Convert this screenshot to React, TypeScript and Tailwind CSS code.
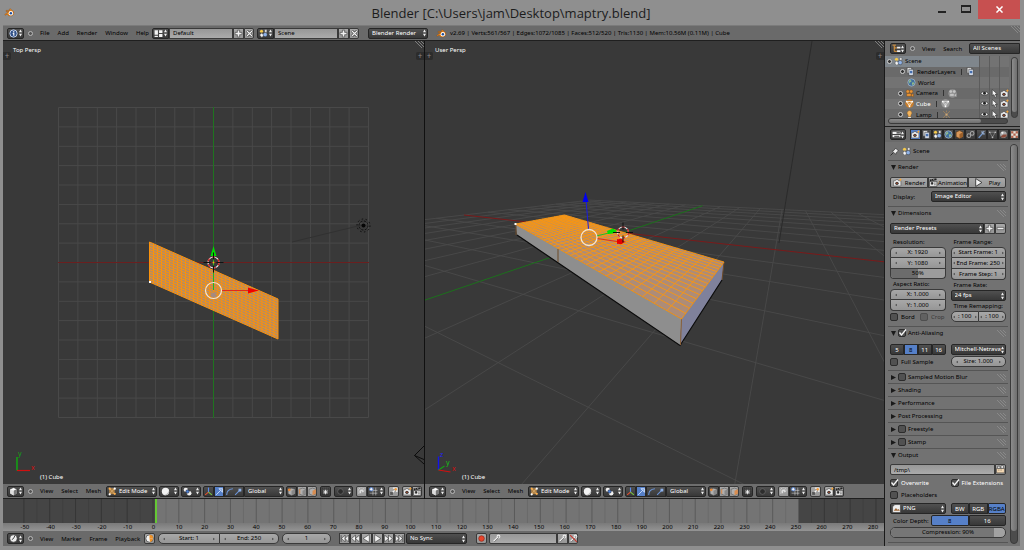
import type { ReactNode } from "react";
import { clsx } from "clsx";

type Point = [number, number];

const dark =
  "border border-[#262626] bg-linear-to-b from-[#505050] to-[#383838] text-white";
const light =
  "border border-[#3a3a3a] bg-linear-to-b from-[#a8a8a8] to-[#969696] text-black";
const field =
  "border border-[#3a3a3a] bg-linear-to-b from-[#979797] to-[#ababab] text-black";
const active = "border border-[#262626] bg-[#5680c8] text-black";

/* ---------- icons ---------- */

function Icon({ children, big }: { children: ReactNode; big?: boolean }) {
  return (
    <svg
      viewBox="0 0 16 16"
      className={clsx("shrink-0", big ? "size-[11px]" : "size-[9px]")}
      aria-hidden="true"
    >
      {children}
    </svg>
  );
}

const BlenderIcon = () => (
  <Icon big>
    <path
      d="M1 11 7 6.5H3V5h6L7.5 3.5 9 2.5l5 4.5a5 4.5 0 1 1-9.500 3L2.500 12z"
      fill="#f08a1c"
      stroke="#8a4a10"
      strokeWidth=".6"
    />
    <circle cx="10" cy="9" r="3.2" fill="#fff" />
    <circle cx="10" cy="9" r="1.8" fill="#1f4f9c" />
  </Icon>
);

const InfoIcon = () => (
  <Icon>
    <circle cx="8" cy="8" r="6.5" fill="#33538a" stroke="#c9d6ee" strokeWidth="1.6" />
    <path d="M7 4h2.500v2H7zM6.500 7h3v5h-2V8.500h-1z" fill="#fff" />
  </Icon>
);

const CubeIcon = () => (
  <Icon>
    <path d="M8 1 14 3.500v8L8 15 2 11.500v-8z" fill="#fff" stroke="#222" />
    <path d="M8 6.500 14 3.500v8L8 15z" fill="#777" />
    <path d="M2 3.500 8 6.500v8.500L2 11.500z" fill="#ddd" />
  </Icon>
);

const ClockIcon = () => (
  <Icon>
    <circle cx="8" cy="8" r="6.5" fill="#eee" stroke="#333" />
    <path d="M8 8 10.500 3M8 8l-3 2" stroke="#222" strokeWidth="1.5" />
  </Icon>
);

const KeyClockIcon = () => (
  <Icon>
    <circle cx="8" cy="8" r="6.5" fill="#f3f3f3" stroke="#222" />
    <path d="M8 8V1.500A6.500 6.500 0 0 1 14.500 8z" fill="#ef9228" />
    <path d="M8 8h6a6 6 0 0 1-5 6z" fill="#ef9228" />
  </Icon>
);

const LayoutIcon = () => (
  <Icon>
    <path d="M1 2h6v8H1zM9 2h6v5H9zM9 9h6v5H9zM1 12h6v2H1z" fill="#f2f2f2" />
  </Icon>
);

const SceneIcon = () => (
  <Icon>
    <circle cx="4.500" cy="4" r="2.800" fill="#f4c94a" />
    <path d="M1 10.500 5 7l4 4-4 4z" fill="#f3f3f3" stroke="#333" strokeWidth=".7" />
    <circle cx="11" cy="10" r="3.800" fill="#8fb2e6" stroke="#222" strokeWidth=".7" />
    <path d="M10 1h4v5h-4z" fill="#e8e8e8" stroke="#333" strokeWidth=".7" />
  </Icon>
);

const LayersIcon = () => (
  <Icon>
    <path d="M2 1h8v10H2z" fill="#eee" stroke="#333" />
    <path d="M5 4h8v11H5z" fill="#d4dcea" stroke="#333" />
    <circle cx="9" cy="9" r="2.500" fill="#466fae" />
  </Icon>
);

const WorldIcon = () => (
  <Icon>
    <circle cx="8" cy="8" r="6.500" fill="#41709f" stroke="#c5cfda" />
    <path d="M4 4q4-2 4 2l-3 2q-1 3-2 1zM9 8q4-1 4 2l-3 3q-2-2-1-5z" fill="#8fb88a" />
  </Icon>
);

const CameraObjIcon = ({ ghost }: { ghost?: boolean }) => (
  <Icon>
    {ghost && <circle cx="8" cy="8" r="7.500" fill="#8f8f8f" />}
    <g fill={ghost ? "#c4c4c4" : "#e79436"} stroke={ghost ? "#7a7a7a" : "#6a3d10"} strokeWidth=".6">
      <circle cx="5" cy="4.500" r="3" />
      <circle cx="11" cy="4.500" r="3" />
      <path d="M3 8h8v5H3zM11 10l4-2v6l-4-2z" />
    </g>
  </Icon>
);

const MeshIcon = ({ ghost }: { ghost?: boolean }) => (
  <Icon>
    <circle cx="8" cy="8" r="7.500" fill={ghost ? "#9a9a9a" : "#c97e2c"} />
    <path d="M3 4.500h10L8 13z" fill="none" stroke={ghost ? "#ddd" : "#fff"} strokeWidth="1.300" />
    <path d="M3 4.500 8 8l5-3.500M8 8v5" stroke={ghost ? "#ddd" : "#ffd9a0"} fill="none" />
    <circle cx="3" cy="4.500" r="1.500" fill="#fff" />
    <circle cx="13" cy="4.500" r="1.500" fill="#fff" />
    <circle cx="8" cy="13" r="1.500" fill="#fff" />
  </Icon>
);

const LampIcon = () => (
  <Icon>
    <path d="M8 1a4.500 4.500 0 0 1 2.500 8v3h-5V9A4.500 4.500 0 0 1 8 1z" fill="#f5b55c" stroke="#7a4c14" strokeWidth=".6" />
    <path d="M5.500 12.500h5V15h-5z" fill="#e8e8e8" />
  </Icon>
);

const RayIcon = () => (
  <Icon>
    <path d="m2 2 12 12M14 2 2 14M8 1v3M8 12v3" stroke="#a98658" strokeWidth="1.300" />
    <circle cx="8" cy="8" r="2" fill="#cfa878" />
  </Icon>
);

const RenderIcon = () => (
  <Icon>
    <path d="M1 5h3l1-2h4l1 2h4v9H1z" fill="#eee" stroke="#333" strokeWidth=".8" />
    <circle cx="7" cy="9.500" r="3" fill="#333" />
    <circle cx="7" cy="9.500" r="1.300" fill="#c4542f" />
    <path d="m13 0 1 2.200L16 3l-2 .9L13 6l-.9-2.100L10 3l2.100-.8z" fill="#f5a53a" />
  </Icon>
);

const ClapIcon = () => (
  <Icon>
    <path d="M1 6h13v9H1z" fill="#e9e9e9" stroke="#222" />
    <path d="M1 2.500 13 .5l.6 3L1.600 6z" fill="#222" />
    <path d="m4 2.500 1 2M8 1.800l1 2" stroke="#eee" />
    <path d="M4 8h3v3H4zM9 9h3M9 12h3" fill="#222" stroke="#222" />
  </Icon>
);

const PlayIcon = () => (
  <Icon>
    <path d="M3 1 14 8 3 15z" fill="#f4f4f4" stroke="#222" strokeWidth="1.400" />
  </Icon>
);

const PlusIcon = () => (
  <Icon>
    <path d="M6 2h4v4h4v4h-4v4H6v-4H2V6h4z" fill="#f0f0f0" stroke="#333" />
  </Icon>
);

const MinusIcon = () => (
  <Icon>
    <path d="M2 6h12v4H2z" fill="#f0f0f0" stroke="#333" />
  </Icon>
);

const CrossIcon = () => (
  <Icon>
    <path d="m3.500 3.500 9 9m0-9-9 9" stroke="#333" strokeWidth="4.500" />
    <path d="m3.500 3.500 9 9m0-9-9 9" stroke="#f0f0f0" strokeWidth="2.200" />
  </Icon>
);

const EditModeIcon = () => (
  <Icon>
    <path d="M3 3h8v9H3z" fill="#a87b3e" stroke="#e2a559" />
    <path d="m3 3 8 9M11 3l-8 9" stroke="#f0c58a" />
    <circle cx="3" cy="3" r="2" fill="#ffb14d" />
    <circle cx="12" cy="3" r="2" fill="#fff" />
    <circle cx="3" cy="13" r="2" fill="#fff" />
    <circle cx="12" cy="12" r="2" fill="#ffb14d" />
  </Icon>
);

const SolidIcon = () => (
  <Icon>
    <circle cx="8" cy="8" r="6.500" fill="#f2f2f2" />
    <path d="M14 6A6.500 6.500 0 0 1 5 14q7-1 9-8z" fill="#bbb" />
  </Icon>
);

const PivotIcon = () => (
  <Icon>
    <circle cx="5" cy="5" r="3.800" fill="#f2f2f2" />
    <circle cx="11" cy="11" r="4" fill="#f2f2f2" />
    <circle cx="8" cy="8" r="3" fill="#4c7fd0" stroke="#223" />
  </Icon>
);

const AxesIcon = () => (
  <Icon>
    <path d="M8 9V1" stroke="#5b8cf0" strokeWidth="2" />
    <path d="m8 9-6 5" stroke="#e8502e" strokeWidth="2" />
    <path d="m8 9 6 5" stroke="#7ac943" strokeWidth="2" />
  </Icon>
);

const TranslateIcon = () => (
  <Icon>
    <path d="M2 14 10 6M7 3h6.500v6.500z" stroke="#dce9ff" fill="#7aa3e6" strokeWidth="1.400" />
  </Icon>
);

const RotateIcon = () => (
  <Icon>
    <path d="M3 14Q3 4 14 3" fill="none" stroke="#6b95d8" strokeWidth="2" />
  </Icon>
);

const ScaleIcon = () => (
  <Icon>
    <path d="m2 14 8-8" stroke="#6b95d8" strokeWidth="2" />
    <path d="M8 3h5v5H8z" fill="#8fb2ea" />
  </Icon>
);

const SelectCube = ({ mode }: { mode: "vertex" | "edge" | "face" }) => (
  <Icon>
    <path d="M2 4 8 2l6 2v8l-6 3-6-3z" fill="#b0b0b0" stroke="#555" />
    <path d="M8 6.500v8L14 12V4z" fill={mode === "face" ? "#d98d50" : "#888"} />
    {mode === "edge" && <path d="M3 4v8" stroke="#d98d50" strokeWidth="2" />}
    {mode === "vertex" && <circle cx="4" cy="5" r="2.500" fill="#e6893a" />}
  </Icon>
);

const OccludeIcon = () => (
  <Icon>
    <path d="M2 2h12v12H2z" fill="none" stroke="#222" strokeDasharray="2 1.500" />
    <path d="M8 5v8M4 9h8M5 6l6 6M11 6l-6 6" stroke="#f4f4f4" strokeWidth="1.500" />
  </Icon>
);

const DotIcon = () => (
  <Icon>
    <circle cx="8" cy="8" r="5" fill="#2d2d2d" stroke="#777" />
  </Icon>
);

const MagnetIcon = () => (
  <Icon>
    <path d="M4 12 3 7q2-6 7-4l3 4M6 11 6 8q1-3 3-2l2 3" fill="none" stroke="#ddd" strokeWidth="2.600" />
    <path d="M4 12 3 7q2-6 7-4l3 4" fill="none" stroke="#666" />
  </Icon>
);

const SnapIcon = () => (
  <Icon>
    <path d="M7 1v14M12 1v14M1 6h14M1 11h14" stroke="#d8d8d8" />
    <circle cx="4" cy="4" r="3" fill="#f4f4f4" stroke="#4a7dd8" strokeWidth="1.500" />
  </Icon>
);

const WandIcon = () => (
  <Icon>
    <path d="m3 13 7-7M7 2h7v7" stroke="#f4f4f4" strokeWidth="2.400" fill="none" />
    <path d="M2 9h5v5H2z" fill="#555" />
    <circle cx="12" cy="4" r="2.200" fill="#ef9a3c" />
  </Icon>
);

const TreeIcon = () => (
  <Icon>
    <path d="M1 2h6M4 3v10h5M4 7h5" stroke="#f2a23c" strokeWidth="1.600" fill="none" />
    <path d="M9 5h6v3H9zM9 11h6v3H9z" fill="#eee" />
  </Icon>
);

const SlidersIcon = () => (
  <Icon>
    <path d="M1 3h14v4H1zM1 9h14v4H1z" fill="#f2f2f2" />
    <path d="M8 4h6v2H8zM4 10h9v2H4z" fill="#333" />
  </Icon>
);

const PinIcon = () => (
  <Icon>
    <path d="m1 15 5-5" stroke="#222" strokeWidth="1.500" />
    <path d="m4 7 3-1 3-4 5 5-4 3-1 3z" fill="#eee" stroke="#222" />
  </Icon>
);

const FolderIcon = () => (
  <Icon>
    <path d="M1 6h14v8H1z" fill="#f5d9b4" stroke="#333" />
    <path d="M3 2h4v4H3zM9 1h4v5H9z" fill="#fff" stroke="#333" />
    <path d="M4 9h2M8 9h2" stroke="#333" />
  </Icon>
);

const ImageIcon = () => (
  <Icon>
    <path d="M5 1h10v14H1V5z" fill="#eee" stroke="#333" />
    <path d="M3 12 7 7l3 3 2-1 2 3z" fill="#a06a3b" />
  </Icon>
);

const EyeIcon = () => (
  <Icon>
    <path d="M1 8q7-7 14 0-7 6-14 0z" fill="#f6f6f6" stroke="#222" />
    <circle cx="8" cy="7.500" r="2.600" fill="#222" />
  </Icon>
);

const PointerIcon = () => (
  <Icon>
    <path d="M4 1v11l3-2 2 5 2.500-1-2-5H13z" fill="#f6f6f6" stroke="#222" />
  </Icon>
);

const LinkIcon = () => (
  <Icon>
    <circle cx="5" cy="10" r="3.200" fill="none" stroke="#a8a8a8" strokeWidth="1.800" />
    <circle cx="11" cy="6" r="3.200" fill="none" stroke="#a8a8a8" strokeWidth="1.800" />
  </Icon>
);

const WrenchIcon = () => (
  <Icon>
    <path d="m3 14 7-8" stroke="#7397cc" strokeWidth="2.600" />
    <path d="M9 2q-1 5 5 5M9 6l4-4" fill="none" stroke="#93acd0" strokeWidth="2" />
  </Icon>
);

const TriIcon = () => (
  <Icon>
    <path d="M3 4h10L8 13z" fill="none" stroke="#999" />
    <circle cx="3" cy="4" r="1.500" fill="#bbb" />
    <circle cx="13" cy="4" r="1.500" fill="#bbb" />
    <circle cx="8" cy="13" r="1.500" fill="#bbb" />
  </Icon>
);

const MaterialIcon = () => (
  <Icon>
    <circle cx="8" cy="8" r="6" fill="#a8a8a8" />
    <path d="M8 8h6a6 6 0 0 1-11 3z" fill="#8a4a3a" />
    <circle cx="6" cy="5" r="2" fill="#eee" />
  </Icon>
);

const TextureIcon = () => (
  <Icon>
    <path d="M2 2h12v12H2z" fill="#e4e0d8" />
    <path d="M2 2h4v4H2zM10 2h4v4h-4zM6 6h4v4H6zM2 10h4v4H2zM10 10h4v4h-4z" fill="#b0604a" />
  </Icon>
);

const BoxIcon = () => (
  <Icon>
    <path d="M8 1 14 4v8l-6 3-6-3V4z" fill="#d8975a" stroke="#5a3713" />
    <path d="M8 7v8l6-3V4z" fill="#9c602a" />
  </Icon>
);

const KeyIcon = ({ off }: { off?: boolean }) => (
  <Icon>
    <path d="m3 13 7-7" stroke="#eee" strokeWidth="2.400" />
    <circle cx="11.500" cy="4.500" r="2.500" fill="none" stroke="#eee" strokeWidth="1.800" />
    <path d="m4 14 8-8" stroke="#444" />
    {off && <path d="m2 2 12 12" stroke="#c8372d" strokeWidth="2" />}
  </Icon>
);

const Arrows = () => (
  <svg viewBox="0 0 3 8" className="pointer-events-none h-[8px] w-[3px] shrink-0" aria-hidden="true">
    <path d="M0 3.200 1.500 .5 3 3.200zM0 4.800l1.500 2.700L3 4.800z" fill="#f0f0f0" />
  </svg>
);

const Grip = () => (
  <svg viewBox="0 0 9 7" className="h-[7px] w-[9px] shrink-0" aria-hidden="true">
    <path d="m0 0 7 7M3 0l6 6M6 0l3 3" stroke="#8f8f8f" strokeWidth=".8" />
  </svg>
);

/* ---------- widgets ---------- */

function Drop({
  label,
  icon,
  text,
  className,
}: {
  label: string;
  icon?: ReactNode;
  text?: string;
  className?: string;
}) {
  return (
    <div className={clsx("flex h-[11px] items-center overflow-hidden rounded-[2px] px-px", dark, className)}>
      {icon}
      <select
        aria-label={label}
        className={clsx(
          "h-[9px] w-0 min-w-0 flex-1 appearance-none bg-transparent leading-[9px] outline-none",
          text && "pl-[2px]"
        )}
      >
        <option>{text ?? ""}</option>
      </select>
      <Arrows />
    </div>
  );
}

function Tool({
  label,
  tone = "light",
  className,
  children,
}: {
  label: string;
  tone?: "light" | "dark" | "active";
  className?: string;
  children: ReactNode;
}) {
  return (
    <button
      type="button"
      aria-label={label}
      className={clsx(
        "flex h-[11px] items-center justify-center",
        tone === "light" && light,
        tone === "dark" && dark,
        tone === "active" && active,
        className
      )}
    >
      {children}
    </button>
  );
}

function NumberField({ value, tight, className }: { value: string; tight?: boolean; className?: string }) {
  return (
    <div className={clsx("flex h-[11px] min-w-0 items-center", tight ? "px-px" : "px-[4px]", light, className)}>
      <svg viewBox="0 0 3 4" className="h-[4px] w-[2px] shrink-0" aria-hidden="true">
        <path d="M3 0v4L0 2z" fill="#555" />
      </svg>
      <input
        aria-label={value.split(":")[0] || "Remap"}
        defaultValue={value}
        className="h-[9px] w-0 min-w-0 flex-1 bg-transparent text-center leading-[9px] outline-none"
      />
      <svg viewBox="0 0 3 4" className="h-[4px] w-[2px] shrink-0" aria-hidden="true">
        <path d="M0 0v4l3-2z" fill="#555" />
      </svg>
    </div>
  );
}

function Check({
  label,
  text,
  checked,
  className,
}: {
  label: string;
  text?: boolean;
  checked?: boolean;
  className?: string;
}) {
  return (
    <label className={clsx("flex items-center gap-[3px] whitespace-nowrap", className)}>
      <span className="grid shrink-0">
        <input
          type="checkbox"
          aria-label={label}
          defaultChecked={checked}
          className="peer col-start-1 row-start-1 size-[8px] appearance-none rounded-[2px] border border-[#2c2c2c] bg-[#515151]"
        />
        <svg
          viewBox="0 0 8 8"
          className="pointer-events-none invisible col-start-1 row-start-1 size-[8px] overflow-visible peer-checked:visible"
          aria-hidden="true"
        >
          <path d="m1.500 3.500 2 2.500L8 .5" fill="none" stroke="#f6f6f6" strokeWidth="1.300" />
        </svg>
      </span>
      {text !== false && label}
    </label>
  );
}

function Collapse() {
  return (
    <button
      type="button"
      aria-label="Collapse menus"
      className="size-[5px] rounded-full border border-[#b8b8b8] bg-[#555]"
    />
  );
}

function Menu({ items, className }: { items: string[]; className?: string }) {
  return (
    <nav className={clsx("flex", className)}>
      {items.map((item) => (
        <button key={item} type="button">
          {item}
        </button>
      ))}
    </nav>
  );
}

function DataBlock({ icon, name }: { icon: ReactNode; name: string }) {
  return (
    <div className="flex">
      <Drop label={`Browse ${name}`} icon={icon} className="w-[17px] rounded-r-none" />
      <input
        aria-label={`${name} name`}
        defaultValue={name}
        className={clsx("h-[11px] w-[64px] px-[3px] leading-[9px]", field)}
      />
      <Tool label={`Add ${name}`} className="w-[11px]">
        <PlusIcon />
      </Tool>
      <Tool label={`Remove ${name}`} className="w-[10px] rounded-r-[2px]">
        <CrossIcon />
      </Tool>
    </div>
  );
}

/* ---------- title bar and info header ---------- */

function TitleBar() {
  return (
    <header className="flex h-[25px] shrink-0 items-start bg-[#8f8f8f]">
      <div className="flex h-[25px] w-[92px] items-center pl-[4px]">
        <BlenderIcon />
      </div>
      <h1 className="flex-1 pt-[3px] text-center font-['Open_Sans',sans-serif] text-[13px] leading-[21px] text-[#1c1c1c]">
        Blender [C:\Users\jam\Desktop\maptry.blend]
      </h1>
      <div className="mr-[4px] flex">
        <button type="button" aria-label="Minimize" className="flex h-[18px] w-[24px] items-center justify-center pt-[6px]">
          <span className="h-[2px] w-[8px] bg-[#222]" />
        </button>
        <button type="button" aria-label="Maximize" className="flex h-[18px] w-[24px] items-center justify-center">
          <span className="h-[8px] w-[10px] border-2 border-x border-[#222]" />
        </button>
        <button type="button" aria-label="Close" className="flex h-[19px] w-[42px] items-center justify-center bg-[#c75050]">
          <svg viewBox="0 0 8 8" className="size-[7px]" aria-hidden="true">
            <path d="m.5.5 7 7m0-7-7 7" stroke="#fff" strokeWidth="1.700" />
          </svg>
        </button>
      </div>
    </header>
  );
}

function InfoHeader() {
  return (
    <div className="flex h-[16px] shrink-0 items-center border-t border-b border-t-[#7b7b7b] border-b-[#1f1f1f] bg-[#6a6a6a] pl-[4px] whitespace-nowrap">
      <Drop label="Editor type" icon={<InfoIcon />} className="w-[17px]" />
      <div className="ml-[4px] flex items-center">
        <Collapse />
      </div>
      <Menu items={["File", "Add", "Render", "Window", "Help"]} className="ml-[7px] w-[112px] gap-[8px]" />
      <DataBlock icon={<LayoutIcon />} name="Default" />
      <div className="ml-[3px]">
        <DataBlock icon={<SceneIcon />} name="Scene" />
      </div>
      <Drop label="Render engine" text="Blender Render" className="ml-[9px] w-[60px]" />
      <div className="ml-[8px]">
        <BlenderIcon />
      </div>
      <p className="ml-[3px]">
        v2.69 | Verts:561/567 | Edges:1072/1085 | Faces:512/520 | Tris:1130 | Mem:10.56M (0.11M) | Cube
      </p>
      <div className="ml-auto self-start">
        <Grip />
      </div>
    </div>
  );
}

/* ---------- 3D viewports ---------- */

// Bilinear-with-perspective map of the unit square onto a four-sided face.
function project([p0, p1, p2, p3]: Point[]) {
  const sx = p0[0] - p1[0] + p2[0] - p3[0];
  const sy = p0[1] - p1[1] + p2[1] - p3[1];
  const dx1 = p1[0] - p2[0];
  const dy1 = p1[1] - p2[1];
  const dx2 = p3[0] - p2[0];
  const dy2 = p3[1] - p2[1];
  const det = dx1 * dy2 - dx2 * dy1;
  const g = (sx * dy2 - dx2 * sy) / det;
  const h = (dx1 * sy - sx * dy1) / det;
  return (u: number, v: number): Point => {
    const w = g * u + h * v + 1;
    return [
      ((p1[0] - p0[0] + g * p1[0]) * u + (p3[0] - p0[0] + h * p3[0]) * v + p0[0]) / w,
      ((p1[1] - p0[1] + g * p1[1]) * u + (p3[1] - p0[1] + h * p3[1]) * v + p0[1]) / w,
    ];
  };
}

const segment = (a: Point, b: Point) =>
  `M${a[0].toFixed(1)} ${a[1].toFixed(1)}L${b[0].toFixed(1)} ${b[1].toFixed(1)}`;

function wire(corners: Point[], cols: number, rows: number) {
  const at = project(corners);
  let d = "";
  for (let i = 0; i <= cols; i++) d += segment(at(i / cols, 0), at(i / cols, 1));
  for (let j = 0; j <= rows; j++) d += segment(at(0, j / rows), at(1, j / rows));
  return d;
}

// Floor plane seen through the user camera, in grid units.
const depth = (x: number, y: number) => 1 - 0.0584 * x + 0.1164 * y;
const floor = (x: number, y: number): Point => [
  (623 - 7.22 * x + 91.7 * y) / depth(x, y),
  (232.7 - 10.34 * x + 20.56 * y) / depth(x, y),
];

function floorGrid() {
  let d = "";
  for (let i = -8; i <= 8; i++) {
    if (i === 0) continue;
    const nearY = Math.max(-8, (0.1 - 1 + 0.0584 * i) / 0.1164);
    const nearX = Math.min(8, (1 - 0.1 + 0.1164 * i) / 0.0584);
    d += segment(floor(i, 8), floor(i, nearY));
    if (nearX > -8) d += segment(floor(-8, i), floor(nearX, i));
  }
  return d;
}

const topMesh: Point[] = [[149.5, 242], [278, 299], [278, 339], [149.5, 282]];
const topGrid: Point[] = [[58.5, 107.5], [368.5, 107.5], [368.5, 417.5], [58.5, 417.5]];
const userMesh: Point[] = [[515.5, 224], [681.5, 319], [724, 262], [564.5, 215]];

const poly = (points: Point[]) => points.map((p) => p.join(",")).join(" ");

function Cursor3D({ x, y }: { x: number; y: number }) {
  return (
    <g fill="none">
      <circle cx={x} cy={y} r="5.5" stroke="#e8e8e8" strokeWidth="1.2" />
      <circle cx={x} cy={y} r="5.5" stroke="#d01818" strokeWidth="1.2" strokeDasharray="3 3" />
      <path
        d={`M${x - 10} ${y}h7M${x + 3} ${y}h7M${x} ${y - 10}v7M${x} ${y + 3}v7`}
        stroke="#111"
        strokeWidth="1"
      />
    </g>
  );
}

function TopScene() {
  return (
    <svg viewBox="3 41 421 443" preserveAspectRatio="xMidYMid slice" className="absolute inset-0 size-full" aria-label="Top view">
      <path d={wire(topGrid, 16, 16)} stroke="#494949" fill="none" />
      <path d="M58 262.500h311" stroke="#6b1f1f" />
      <path d="M213.500 107v311" stroke="#1f741f" />
      <path d="m292 242 70-17" stroke="#313131" />
      <polygon points={poly(topMesh)} fill="#ab8b70" />
      <path d={wire(topMesh, 32, 16)} stroke="#fb920c" fill="none" />
      <path d="M149 281h2v2h-2z" fill="#fff" />
      <path d="M213.500 290v-34" stroke="#22b422" />
      <path d="m213.500 246 3 10h-6z" fill="#00dc00" />
      <path d="M222 290.500h27" stroke="#e02a1a" />
      <path d="m259 290.500-11 3v-6z" fill="#f00000" />
      <circle cx="213.500" cy="290.500" r="8" fill="none" stroke="#f4e6d2" strokeWidth="1.2" />
      <circle cx="213.500" cy="295" r="2.500" fill="#a58a80" />
      <Cursor3D x={213.5} y={262.5} />
      <circle cx="213.500" cy="262.500" r="1" fill="#e8b020" />
      <circle cx="363.500" cy="225.500" r="2" fill="#050505" />
      <circle cx="363.500" cy="225.500" r="4.500" fill="none" stroke="#0c0c0c" strokeDasharray="2 1.500" />
      <circle cx="363.500" cy="225.500" r="6.500" fill="none" stroke="#0c0c0c" strokeDasharray="1.500 2.500" />
      <path d="m424 446-9.500 9.500L424 464M414.500 455.500l9.500 4" stroke="#0c0c0c" fill="none" />
      <path d="M17 457v13.500" stroke="#14a014" strokeWidth="1.600" />
      <path d="M17 470.500h13" stroke="#d01010" strokeWidth="1.200" />
      <text x="18" y="456" fontSize="7" fill="#14a014">y</text>
      <text x="31" y="470" fontSize="7" fill="#d01010">x</text>
    </svg>
  );
}

function UserScene() {
  return (
    <svg viewBox="425 41 459 443" preserveAspectRatio="xMidYMid slice" className="absolute inset-0 size-full" aria-label="User view">
      <path d={floorGrid()} stroke="#494949" strokeWidth=".9" fill="none" />
      <path d={segment(floor(-8, 0), floor(8, 0))} stroke="#7a1a1a" />
      <path d={segment(floor(0, 8), floor(0, -5))} stroke="#1c701c" />
      <path d="m812 41-33 202" stroke="#2b2b2b" />
      <polygon points="515.5,224 681.5,319 680,345.5 517,235" fill="#8e8e8e" />
      <polygon points="681.5,319 724,262 722,280 680,345.5" fill="#7f819b" />
      <path d="m517 235 163 110.500L722 280" stroke="#0b0b0b" strokeWidth="1.200" fill="none" />
      <path d="M516 224v11M558 249v13" stroke="#6d4a28" />
      <path d="m681.500 319-1 26" stroke="#8a6038" />
      <path d="m724 262-2 18" stroke="#6d4a28" />
      <polygon points={poly(userMesh)} fill="#ad8c78" />
      <path d={wire(userMesh, 32, 16)} stroke="#fb960e" strokeWidth=".9" fill="none" />
      <path d="M514.500 223h2v2h-2z" fill="#fff" />
      <path d="M588.500 229 586 200" stroke="#1a1ae0" />
      <path d="m585.500 192 3 10h-6z" fill="#0000f0" />
      <path d="m596 236 13-3" stroke="#22c022" />
      <path d="m607 231 6-2.500 4 2.500-4 2.500-5 .5z" fill="#00e000" />
      <path d="m597 238.500 20 3" stroke="#e02a1a" />
      <path d="m626 242-9 2v-5z" fill="#f00000" />
      <circle cx="620.500" cy="241.500" r="2.800" fill="#e80000" />
      <circle cx="589" cy="237.500" r="8" fill="none" stroke="#f4e6d2" strokeWidth="1.300" />
      <Cursor3D x={623} y={232.5} />
      <path d="M438.500 456.500v13.500" stroke="#1414e8" strokeWidth="1.400" />
      <path d="m438.500 470 6-4" stroke="#14a014" strokeWidth="1.200" />
      <path d="m438.500 470 12 2" stroke="#d01010" strokeWidth="1.200" />
      <text x="440" y="457" fontSize="7" fill="#2222f0">z</text>
      <text x="446" y="465" fontSize="7" fill="#14c014">y</text>
      <text x="452" y="471" fontSize="7" fill="#d01010">x</text>
    </svg>
  );
}

function Expand({ side }: { side: "left" | "right" }) {
  return (
    <button
      type="button"
      aria-label={`Show ${side} shelf`}
      className={clsx(
        "absolute top-[11px] flex size-[8px] items-center justify-center bg-[#2c2c2c] text-[8px] leading-[8px] text-[#888]",
        side === "left" ? "left-0 rounded-r-[2px]" : "right-0 rounded-l-[2px]"
      )}
    >
      +
    </button>
  );
}

function ViewHeader() {
  return (
    <div className="flex h-[15px] shrink-0 items-center overflow-hidden border-b border-[#1f1f1f] bg-[#6e6e6e] pl-[4px] whitespace-nowrap">
      <Drop label="Editor type" icon={<CubeIcon />} className="w-[17px] shrink-0" />
      <div className="ml-[4px] flex items-center">
        <Collapse />
      </div>
      <Menu items={["View", "Select", "Mesh"]} className="ml-[7px] w-[65px] shrink-0 gap-[8px]" />
      <Drop label="Mode" icon={<EditModeIcon />} text="Edit Mode" className="ml-[1px] w-[51px] shrink-0" />
      <Drop label="Viewport shading" icon={<SolidIcon />} className="ml-[2px] w-[20px] shrink-0" />
      <Drop label="Pivot point" icon={<PivotIcon />} className="ml-[2px] w-[20px] shrink-0" />
      <div className="ml-[2px] flex shrink-0">
        <Tool label="Manipulators" tone="dark" className="w-[11px] rounded-l-[2px]">
          <AxesIcon />
        </Tool>
        <Tool label="Translate" tone="active" className="w-[10px]">
          <TranslateIcon />
        </Tool>
        <Tool label="Rotate" tone="dark" className="w-[10px] border-r-0">
          <RotateIcon />
        </Tool>
        <Tool label="Scale" tone="dark" className="w-[10px] border-l-0">
          <ScaleIcon />
        </Tool>
        <Drop label="Orientation" text="Global" className="w-[40px] rounded-l-none" />
      </div>
      <div className="ml-[2px] flex shrink-0">
        <Tool label="Vertex select" tone="dark" className="w-[11px] rounded-l-[2px] from-[#666] to-[#5a5a5a]">
          <SelectCube mode="vertex" />
        </Tool>
        <Tool label="Edge select" className="w-[10px]">
          <SelectCube mode="edge" />
        </Tool>
        <Tool label="Face select" className="w-[10px] rounded-r-[2px]">
          <SelectCube mode="face" />
        </Tool>
      </div>
      <Tool label="Limit selection" tone="dark" className="ml-[3px] w-[11px] shrink-0 rounded-[2px] from-[#666] to-[#5a5a5a]">
        <OccludeIcon />
      </Tool>
      <Drop label="Proportional editing" icon={<DotIcon />} className="ml-[3px] w-[19px] shrink-0" />
      <div className="ml-[3px] flex shrink-0">
        <Tool label="Snap" className="w-[11px] rounded-l-[2px]">
          <MagnetIcon />
        </Tool>
        <Drop label="Snap element" icon={<SnapIcon />} className="w-[18px] rounded-l-none" />
      </div>
      <Tool label="Auto merge" className="ml-[3px] w-[11px] shrink-0 rounded-[2px]">
        <WandIcon />
      </Tool>
      <div className="ml-[3px] flex shrink-0">
        <Tool label="Render view" className="w-[10px] rounded-l-[2px]">
          <RenderIcon />
        </Tool>
        <Tool label="Animate view" className="w-[10px] rounded-r-[2px]">
          <ClapIcon />
        </Tool>
      </div>
    </div>
  );
}

function Viewport({
  title,
  className,
  children,
}: {
  title: string;
  className: string;
  children: ReactNode;
}) {
  return (
    <section className={clsx("flex min-w-0 basis-0 flex-col", className)}>
      <div className="relative flex-1 overflow-hidden bg-[#393939] text-white">
        {children}
        <span className="absolute top-[5px] left-[10px]">{title}</span>
        <span className="absolute bottom-[3px] left-[37px]">(1) Cube</span>
        <Expand side="left" />
        <Expand side="right" />
        <div className="absolute top-0 right-0">
          <Grip />
        </div>
      </div>
      <ViewHeader />
    </section>
  );
}

/* ---------- timeline ---------- */

const frames = Array.from({ length: 34 }, (_, i) => i * 10 - 50);

function Timeline() {
  return (
    <section className="shrink-0 bg-[#6e6e6e]">
      <svg viewBox="0 0 881 24" preserveAspectRatio="none" className="h-[24px] w-full" aria-label="Frames">
        <path d="M0 0h881v24H0z" fill="#747474" />
        <path d="M0 0h152v24H0zM796 0h85v24h-85z" fill="#454545" />
        {frames.map((f) => (
          <g key={f} stroke="#000">
            <path d={`M${150 + f * 2.582} 0v24`} opacity=".22" />
            <path d={`M${163 + f * 2.582} 0v24`} opacity=".08" />
          </g>
        ))}
        <path d="M152 0h2v24h-2z" fill="#65c834" />
      </svg>
      <div className="flex h-[8px] items-center overflow-hidden bg-linear-to-b from-[#7a7a7a] to-[#949494] text-black">
        <div className="-mr-[2px] ml-[9px] flex min-w-0 flex-1">
          {frames.map((f) => (
            <span key={f} className="w-0 flex-1 text-center">
              {f}
            </span>
          ))}
        </div>
      </div>
      <div className="flex h-[15px] items-center bg-[#6a6a6a] pl-[4px] whitespace-nowrap">
        <Drop label="Editor type" icon={<ClockIcon />} className="w-[17px]" />
        <div className="ml-[4px] flex items-center">
          <Collapse />
        </div>
        <Menu items={["View", "Marker", "Frame", "Playback"]} className="ml-[7px] w-[104px] gap-[8px]" />
        <Tool label="Preview range" className="w-[11px] rounded-[2px]">
          <KeyClockIcon />
        </Tool>
        <div className="ml-[3px] flex">
          <NumberField value="Start: 1" className="w-[62px] rounded-l-[5px]" />
          <NumberField value="End: 250" className="w-[59px] rounded-r-[5px] border-l-0" />
        </div>
        <NumberField value="1" className="ml-[3px] w-[49px] rounded-[5px]" />
        <div className="ml-[8px] flex">
          {["First frame", "Previous keyframe", "Play backwards", "Play", "Next keyframe", "Last frame"].map((name, i) => (
            <Tool key={name} label={name} className="w-[11px]">
              <Icon>
                <path
                  d={
                    [
                      "M2 2v12M9 2 3 8l6 6zM15 2 9 8l6 6z",
                      "M8 2 1 8l7 6zM15 2 8 8l7 6z",
                      "M13 1 2 8l11 7z",
                      "M3 1v14l11-7z",
                      "M1 2l7 6-7 6zM8 2l7 6-7 6z",
                      "M1 2l6 6-6 6zM7 2l6 6-6 6zM14 2v12",
                    ][i]
                  }
                  fill="#f4f4f4"
                  stroke="#2a2a2a"
                />
              </Icon>
            </Tool>
          ))}
        </div>
        <Drop label="Sync mode" text="No Sync" className="ml-[1px] w-[61px]" />
        <Tool label="Record" className="ml-[9px] w-[11px] rounded-[2px]">
          <Icon>
            <circle cx="8" cy="8" r="5" fill="#e8432a" stroke="#7c1c10" />
          </Icon>
        </Tool>
        <div className="ml-[2px] flex">
          <div className={clsx("flex h-[11px] w-[68px] items-center rounded-l-[2px] px-[2px]", field)}>
            <KeyIcon />
            <input aria-label="Keying set" className="h-[9px] min-w-0 flex-1 bg-transparent" />
          </div>
          <Tool label="Insert keyframes" className="w-[11px]">
            <KeyIcon />
          </Tool>
          <Tool label="Delete keyframes" className="w-[10px] rounded-r-[2px]">
            <KeyIcon off />
          </Tool>
        </div>
      </div>
    </section>
  );
}

/* ---------- outliner ---------- */

function Expander({ className }: { className?: string }) {
  return (
    <button
      type="button"
      aria-label="Expand"
      className={clsx("size-[5px] shrink-0 rounded-full border border-[#d0d0d0] bg-[#333]", className)}
    />
  );
}

const rows: {
  name: string;
  indent: string;
  expander?: boolean;
  icon: ReactNode;
  extra?: ReactNode;
  toggles?: boolean;
  selected?: boolean;
}[] = [
  { name: "Scene", indent: "pl-[2px]", expander: true, icon: <SceneIcon /> },
  { name: "RenderLayers", indent: "pl-[15px]", expander: true, icon: <LayersIcon />, extra: <LayersIcon /> },
  { name: "World", indent: "pl-[22px]", icon: <WorldIcon /> },
  {
    name: "Camera",
    indent: "pl-[13px]",
    expander: true,
    icon: <CameraObjIcon />,
    extra: <CameraObjIcon ghost />,
    toggles: true,
  },
  {
    name: "Cube",
    indent: "pl-[13px]",
    expander: true,
    icon: <MeshIcon />,
    extra: <MeshIcon ghost />,
    toggles: true,
    selected: true,
  },
  { name: "Lamp", indent: "pl-[13px]", expander: true, icon: <LampIcon />, extra: <RayIcon />, toggles: true },
];

function Outliner() {
  return (
    <section className="flex shrink-0 flex-col border-b border-[#1f1f1f] bg-[#6e6e6e]">
      <div className="flex h-[15px] items-center overflow-hidden pl-[5px] whitespace-nowrap">
        <Drop label="Editor type" icon={<TreeIcon />} className="w-[16px] shrink-0" />
        <div className="ml-[4px] flex items-center">
          <Collapse />
        </div>
        <Menu items={["View", "Search"]} className="ml-[7px] w-[47px] gap-[8px]" />
        <div className={clsx("h-[11px] flex-1 rounded-l-[2px] pl-[3px]", dark)}>
          <select aria-label="Display mode" className="block h-[9px] w-full appearance-none leading-[9px]">
            <option>All Scenes</option>
          </select>
        </div>
      </div>
      <div className="flex h-[62px]">
        <div className="min-w-0 flex-1 overflow-hidden pr-[1px] whitespace-nowrap">
          <ul className="grid h-[64px] grid-rows-6">
            {rows.map((row, i) => (
              <li key={row.name} className={clsx("flex min-h-0", i % 2 ? "bg-[#6a6a6a]" : "bg-[#737373]")}>
                <div className={clsx("flex flex-1 items-center", row.indent, i === 0 && "bg-[#7f868c]")}>
                  {row.expander && <Expander className={i === 1 ? "mr-px" : "mr-[2px]"} />}
                  {row.icon}
                  <span className={clsx("ml-[2px]", row.selected && "text-white")}>{row.name}</span>
                  {row.extra && (
                    <span className="ml-[5px] flex items-center gap-[4px]">
                      <span className="h-[6px] w-px bg-[#333]" />
                      {row.extra}
                    </span>
                  )}
                </div>
                {[<EyeIcon key="e" />, <PointerIcon key="p" />, <RenderIcon key="r" />].map((icon, k) => (
                  <span key={k} className="flex w-[10px] items-center justify-center border-l border-[#5c5c5c]">
                    {row.toggles && (
                      <button type="button" aria-label={`${row.name} ${["visible", "selectable", "renderable"][k]}`}>
                        {icon}
                      </button>
                    )}
                  </span>
                ))}
              </li>
            ))}
          </ul>
        </div>
        <div className="mt-px mr-[2px] ml-[1px] flex w-[7px] flex-col rounded-[4px] border border-[#3a3a3a] bg-[#4c4c4c]">
          <div className="h-[54px] rounded-[4px] bg-linear-to-r from-[#8c8c8c] to-[#6e6e6e]" />
        </div>
      </div>
      <div className="mr-[12px] mb-[2px] ml-[3px] h-[6px] rounded-[4px] border border-[#3a3a3a] bg-[#4c4c4c]">
        <div className="h-full w-[78%] rounded-[4px] bg-linear-to-b from-[#8c8c8c] to-[#6e6e6e]" />
      </div>
    </section>
  );
}

/* ---------- properties ---------- */

function Panel({
  title,
  open,
  toggle,
  checked,
  children,
}: {
  title: string;
  open?: boolean;
  toggle?: boolean;
  checked?: boolean;
  children?: ReactNode;
}) {
  return (
    <section className="border-t border-[#555] px-[2px]">
      <div className="flex h-[12px] items-center">
        <h2 className="flex items-center gap-[2px]">
          <button type="button" aria-label={`Toggle ${title}`} className="ml-px">
            <svg viewBox="0 0 5 5" className="size-[5px]" aria-hidden="true">
              <path d={open ? "M0 0h5L2.500 5z" : "M0 0v5l5-2.500z"} fill="#1a1a1a" />
            </svg>
          </button>
          {toggle && <Check label={title} text={false} checked={checked} />}
          {title}
        </h2>
        <div className="ml-auto">
          <Grip />
        </div>
      </div>
      {children}
    </section>
  );
}

const tabs: [string, ReactNode][] = [
  ["Render", <RenderIcon />],
  ["Render layers", <LayersIcon />],
  ["Scene", <SceneIcon />],
  ["World", <WorldIcon />],
  ["Object", <BoxIcon />],
  ["Constraints", <LinkIcon />],
  ["Modifiers", <WrenchIcon />],
  ["Data", <TriIcon />],
  ["Material", <MaterialIcon />],
  ["Texture", <TextureIcon />],
];

function Properties() {
  return (
    <section className="flex min-h-0 flex-1 flex-col bg-[#727272]">
      <div className="flex h-[15px] shrink-0 items-center overflow-hidden bg-[#6a6a6a] pl-[5px]">
        <Drop label="Editor type" icon={<SlidersIcon />} className="w-[16px] shrink-0" />
        <div className="ml-[4px] flex flex-1">
          {tabs.map(([name, icon], i) => (
            <button
              key={name}
              type="button"
              aria-label={name}
              className={clsx("flex h-[11px] flex-1 items-center justify-center overflow-hidden", i === 0 ? active : dark)}
            >
              {icon}
            </button>
          ))}
        </div>
      </div>
      <div className="flex min-h-0 flex-1">
        <div className="min-w-0 flex-1 overflow-hidden pl-[3px] whitespace-nowrap">
          <div className="flex h-[18px] items-center gap-[3px] pl-[2px]">
            <PinIcon />
            <span className="flex items-center gap-[2px]">
              <SceneIcon />
              Scene
            </span>
          </div>

          <Panel title="Render" open>
            <div className="mt-[4px] flex">
              <Tool label="Render image" className="flex-1 gap-[3px] rounded-l-[2px]">
                <RenderIcon />
                Render
              </Tool>
              <Tool label="Render animation" className="flex-1">
                <ClapIcon />
                Animation
              </Tool>
              <Tool label="Play rendered" className="flex-1 gap-[6px] rounded-r-[2px]">
                <PlayIcon />
                Play
              </Tool>
            </div>
            <div className="mt-[3px] mb-[4px] flex items-center">
              <span className="w-[41px] pl-[3px]">Display:</span>
              <Drop label="Display" text="Image Editor" className="flex-1" />
            </div>
          </Panel>

          <Panel title="Dimensions" open>
            <div className="mt-[4px] flex">
              <Drop label="Presets" text="Render Presets" className="flex-1 rounded-r-none" />
              <Tool label="Add preset" className="w-[11px]">
                <PlusIcon />
              </Tool>
              <Tool label="Remove preset" className="w-[11px] rounded-r-[2px]">
                <MinusIcon />
              </Tool>
            </div>
            <div className="mt-[3px] mb-[4px] grid grid-cols-2 gap-x-[5px] leading-[10px]">
              <div>
                <p className="pl-[3px]">Resolution:</p>
                <NumberField value="X: 1920" className="rounded-t-[4px]" />
                <NumberField value="Y: 1080" className="border-t-0" />
                <div className="grid h-[10px] grid-cols-2 overflow-hidden rounded-b-[4px] border border-t-0 border-[#3a3a3a] bg-[#9c9c9c]">
                  <span className="col-start-1 row-start-1 bg-[#6c6c6c]" />
                  <input
                    aria-label="Resolution percentage"
                    defaultValue="50%"
                    className="col-span-2 col-start-1 row-start-1 h-[9px] w-full min-w-0 bg-transparent text-center leading-[9px]"
                  />
                </div>
                <p className="pl-[3px]">Aspect Ratio:</p>
                <NumberField value="X: 1.000" className="rounded-t-[4px]" />
                <NumberField value="Y: 1.000" className="rounded-b-[4px] border-t-0" />
                <div className="mt-[1px] flex">
                  <Check label="Bord" className="w-[30px]" />
                  <Check label="Crop" className="opacity-50" />
                </div>
              </div>
              <div>
                <p className="pl-[3px]">Frame Range:</p>
                <NumberField tight value="Start Frame: 1" className="rounded-t-[4px]" />
                <NumberField tight value="End Frame: 250" className="border-t-0" />
                <NumberField tight value="Frame Step: 1" className="h-[10px] rounded-b-[4px] border-t-0" />
                <p className="pl-[3px]">Frame Rate:</p>
                <Drop label="Frame rate" text="24 fps" />
                <p className="pl-[3px]">Time Remapping:</p>
                <div className="flex">
                  <NumberField tight value=": 100" className="flex-1 rounded-l-[5px]" />
                  <NumberField tight value=": 100" className="flex-1 rounded-r-[5px] border-l-0" />
                </div>
              </div>
            </div>
          </Panel>

          <Panel title="Anti-Aliasing" open toggle checked>
            <div className="mt-[5px] mb-[3px] grid grid-cols-2 gap-x-[5px] gap-y-[1px]">
              <div className="flex">
                {["5", "8", "11", "16"].map((n) => (
                  <Tool
                    key={n}
                    label={`${n} samples`}
                    tone={n === "8" ? "active" : "dark"}
                    className="flex-1 first:rounded-l-[2px] last:rounded-r-[2px]"
                  >
                    {n}
                  </Tool>
                ))}
              </div>
              <Drop label="Filter" text="Mitchell-Netraval" />
              <Check label="Full Sample" />
              <NumberField value="Size: 1.000" className="rounded-[5px]" />
            </div>
          </Panel>

          <Panel title="Sampled Motion Blur" toggle />
          <Panel title="Shading" />
          <Panel title="Performance" />
          <Panel title="Post Processing" />
          <Panel title="Freestyle" toggle />
          <Panel title="Stamp" toggle />

          <Panel title="Output" open>
            <div className="mt-[3px] flex">
              <input
                aria-label="Output path"
                defaultValue="/tmp\"
                className={clsx("h-[11px] min-w-0 flex-1 rounded-l-[2px] px-[3px] leading-[9px]", field)}
              />
              <Tool label="Browse" className="w-[11px] rounded-r-[2px]">
                <FolderIcon />
              </Tool>
            </div>
            <div className="mt-[3px] grid grid-cols-2 gap-x-[5px] gap-y-[2px] leading-[10px]">
              <Check label="Overwrite" checked className="text-white" />
              <Check label="File Extensions" checked className="text-white" />
              <Check label="Placeholders" />
            </div>
            <div className="mt-[3px] grid grid-cols-2 gap-x-[5px]">
              <Drop label="File format" icon={<ImageIcon />} text="PNG" />
              <div className="flex">
                {["BW", "RGB", "RGBA"].map((mode) => (
                  <Tool
                    key={mode}
                    label={mode}
                    tone={mode === "RGBA" ? "active" : "dark"}
                    className="min-w-0 flex-1 first:rounded-l-[2px] last:rounded-r-[2px]"
                  >
                    {mode}
                  </Tool>
                ))}
              </div>
            </div>
            <div className="mt-[1px] flex items-center">
              <span className="w-[41px] pl-[3px]">Color Depth:</span>
              <Tool label="8 bit" tone="active" className="flex-1 rounded-l-[2px]">
                8
              </Tool>
              <Tool label="16 bit" tone="dark" className="flex-1 rounded-r-[2px]">
                16
              </Tool>
            </div>
            <div className="mt-[1px] mb-[4px] grid h-[11px] grid-cols-10 overflow-hidden rounded-[5px] border border-[#3a3a3a] bg-[#a2a2a2]">
              <span className="col-span-9 col-start-1 row-start-1 bg-[#767676]" />
              <input
                aria-label="Compression"
                defaultValue="Compression: 90%"
                className="col-span-10 col-start-1 row-start-1 h-[9px] w-full min-w-0 bg-transparent text-center leading-[9px]"
              />
            </div>
          </Panel>
          <div className="border-t border-[#555]" />
        </div>
        <div className="mx-[2px] my-[2px] flex w-[8px] flex-col rounded-[4px] border border-[#3a3a3a] bg-[#4c4c4c]">
          <div className="h-[97%] rounded-[4px] bg-linear-to-r from-[#8c8c8c] to-[#6e6e6e]" />
        </div>
      </div>
    </section>
  );
}

export default function App() {
  return (
    <div className="flex h-screen w-full flex-col overflow-hidden bg-[#8f8f8f] font-['Noto_Sans',sans-serif] text-[6px] leading-[8px] text-black">
      <TitleBar />
      <div className="mr-[4px] mb-[4px] ml-[3px] flex min-h-0 flex-1 flex-col">
        <InfoHeader />
        <main className="flex min-h-0 flex-1">
          <div className="flex min-w-0 flex-1 flex-col">
            <div className="flex min-h-0 flex-1">
              <Viewport title="Top Persp" className="grow-[421]">
                <TopScene />
              </Viewport>
              <div className="w-px bg-[#111]" />
              <Viewport title="User Persp" className="grow-[459]">
                <UserScene />
              </Viewport>
            </div>
            <Timeline />
          </div>
          <aside className="flex w-[136px] shrink-0 flex-col border-l border-[#1a1a1a]">
            <Outliner />
            <Properties />
          </aside>
        </main>
      </div>
    </div>
  );
}
